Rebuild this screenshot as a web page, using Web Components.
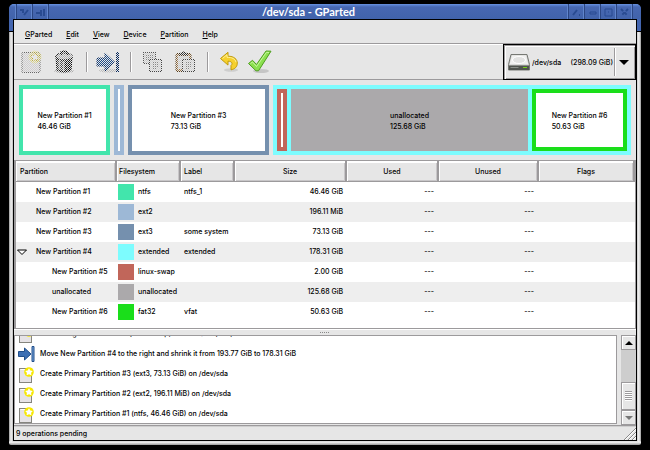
<!DOCTYPE html>
<html lang="en">
<head>
<meta charset="utf-8">
<title>/dev/sda - GParted</title>
<style>
  body { margin: 0; background: #000; font: 500 7px/10px Inter, "Liberation Sans", sans-serif; color: #000; }
</style>
</head>
<body>
<gp-window heading="/dev/sda - GParted">
  <gp-menubar items="GParted,Edit,View,Device,Partition,Help"></gp-menubar>
  <gp-toolbar>
    <gp-tool icon="new" label="New" disabled></gp-tool>
    <gp-tool icon="trash" label="Delete" disabled></gp-tool>
    <gp-separator></gp-separator>
    <gp-tool icon="resize" label="Resize/Move" disabled></gp-tool>
    <gp-separator></gp-separator>
    <gp-tool icon="copy" label="Copy" disabled></gp-tool>
    <gp-tool icon="paste" label="Paste" disabled></gp-tool>
    <gp-separator></gp-separator>
    <gp-tool icon="undo" label="Undo"></gp-tool>
    <gp-tool icon="apply" label="Apply"></gp-tool>
    <gp-device-select slot="end"></gp-device-select>
  </gp-toolbar>
  <gp-map sizes="91 10 141 358">
    <gp-block style="--edge:#42e5ac">New Partition #1<br>46.46 GiB</gp-block>
    <gp-block style="--edge:#9db8d6"></gp-block>
    <gp-block style="--edge:#7590ae">New Partition #3<br>73.13 GiB</gp-block>
    <gp-block style="--edge:#7dfcfe;--fill:#7dfcfe" group>
      <gp-map nested sizes="10 237 95">
        <gp-block style="--edge:#c1665a;--fill:#fff"></gp-block>
        <gp-block style="--edge:#aba9ab;--fill:#aba9ab">unallocated<br>125.68 GiB</gp-block>
        <gp-block style="--edge:#1ade1a;--fill:#fff">New Partition #6<br>50.63 GiB</gp-block>
      </gp-map>
    </gp-block>
  </gp-map>
  <gp-table></gp-table>
  <gp-handle></gp-handle>
  <gp-operations></gp-operations>
  <gp-status>9 operations pending</gp-status>
</gp-window>

<script>
const define = (name, html, setup) => customElements.define(name, class extends HTMLElement {
  connectedCallback() {
    if (this.shadowRoot) return;
    const t = document.createElement('template');
    t.innerHTML = typeof html === 'function' ? html(this) : html;
    this.attachShadow({ mode: 'open' }).append(t.content.cloneNode(true));
    if (setup) setup(this, this.shadowRoot);
  }
});

const star = 'M16 2.2l1.5 3 3.3.4-2.4 2.3.6 3.3-3-1.6-3 1.6.6-3.3-2.4-2.3 3.3-.4z';
const icons = {
  'new': `<rect x="3" y="2.500" width="18" height="20" rx="1" fill="#cfcdcf" stroke="#666"/>
    <circle cx="16" cy="7" r="6.500" fill="#e8dc50" opacity=".5"/><path d="${star}" fill="#e6e6e6" stroke="#b09a10" stroke-width=".8"/>`,
  page: `<rect x="1.500" y="3.500" width="12" height="14" fill="#e6e3e6" stroke="#85857e"/><path d="M2.500 4.500h10" stroke="#fff"/>
    <circle cx="11" cy="7" r="4.800" fill="#f7e800"/><path d="M11 3.200l1.300 2.200 2.500.5-1.700 1.900.3 2.500-2.400-1-2.400 1 .3-2.500-1.700-1.900 2.500-.5z" fill="#fff"/>`,
  trash: `<ellipse cx="12" cy="21" rx="10" ry="2.200" fill="#aaa"/>
    <path d="M4 7h16l-1 13q-7 4-14 0z" fill="#444" stroke="#000"/>
    <path d="M7.500 10v10M11.500 11v10" stroke="#aaa" stroke-width="1.500"/><path d="M14 11v10M17 10v10" stroke="#111" stroke-width="2"/>
    <ellipse cx="12" cy="6.500" rx="8.500" ry="3.500" fill="#aaa" stroke="#000"/><path d="M9 5V2q3-1.500 6 0v3" fill="none" stroke="#000" stroke-width="1.500"/>`,
  resize: `<ellipse cx="12" cy="20.500" rx="9" ry="2" fill="#bbb"/>
    <path d="M1 8h8V3l9.500 9L9 21v-5H1z" fill="#1d4a86" stroke="#06265a"/><rect x="20" y="2" width="3" height="20" fill="#06265a"/>`,
  move: `<path d="M.5 6.500h6V3l6.500 6-6.500 6v-3.500h-6z" fill="#3d70b4" stroke="#214f8b"/><path d="M14 1.500h2v15h-2z" fill="#79a4da" stroke="#214f8b"/>`,
  copy: `<rect x="3.500" y="2.500" width="12" height="11" fill="#ccc" stroke="#555"/><path d="M6 5.500h7M6 7.500h7M6 9.500h7" stroke="#888"/>
    <rect x="9.500" y="9.500" width="12" height="12" fill="#d4d4d4" stroke="#444"/><path d="M12 12.500h7M12 14.500h7M12 16.500h7M12 18.500h5" stroke="#888"/>`,
  paste: `<rect x="3" y="3.500" width="15" height="18" rx="1" fill="#a27a4c" stroke="#553a16"/><rect x="5" y="6" width="11" height="13" fill="#ccc"/>
    <path d="M6 5q0-2 3-2 1.500-2 3 0 3 0 3 2z" fill="#555" stroke="#111"/>
    <rect x="9.500" y="9.500" width="12" height="12" fill="#d4d4d4" stroke="#444"/><path d="M12 12.500h7M12 14.500h7M12 16.500h7M12 18.500h5" stroke="#888"/>`,
  undo: `<ellipse cx="14" cy="20" rx="7" ry="1.800" fill="#000" opacity=".1"/>
    <path d="M3.500 8.500L11 2.300v3.900c6 0 9.300 3 9.300 7 0 3.600-2.500 6-6.300 6.600v-4.300c2-1.700 1-4.300-3-4.300v3.900z" fill="#f6d02d" stroke="#c09a0a" stroke-linejoin="round"/>
    <path d="M5.500 8.500L10 4.700v2.600c5 0 8.300 1.500 9 5" fill="none" stroke="#fff29a"/>`,
  apply: `<ellipse cx="11" cy="21" rx="8" ry="2" fill="#000" opacity=".14"/>
    <path d="M-1.500 13.500l4-3.200 4 4.200L16 1l5 .2L8.500 20.800H6z" fill="#8be04f" stroke="#4f9e20" stroke-linejoin="round"/>
    <path d="M.5 13.500l2-1.500 4 4.500L16.500 2.300l2.500.2" fill="none" stroke="#c8f7a0"/>`,
  disk: `<path d="M3 1.500h16l2.500 10v5.500h-21v-5.500z" fill="#c6c7c4" stroke="#777974" stroke-linejoin="round"/>
    <path d="M3.800 2.300h14.400l2.200 9.200H1.600z" fill="#f0f0ef"/><ellipse cx="11" cy="7" rx="6.500" ry="3.500" fill="#e2e2e1" stroke="#fff"/>
    <path d="M1 12.500h20v4.500H1z" fill="#50544f"/><path d="M2.500 14.500h8" stroke="#8a8e88"/><path d="M15 14.500h4" stroke="#73d216"/>`,
};
const veil = `<defs><pattern id="v" width="2" height="2" patternUnits="userSpaceOnUse"><path d="M0 0h1v1H0zM1 1h1v1H1z" fill="#e6e6e6" shape-rendering="crispEdges"/></pattern></defs><rect x="-1" y="-1" width="26" height="26" fill="url(#v)"/>`;

define('gp-window', el => `
<style>
  :host { display: flex; flex-direction: column; box-sizing: border-box; height: 100vh; padding: 4px 9px 5px; }
  .frame { flex: 1; min-height: 0; display: flex; flex-direction: column; padding: 0 4px 4px; border-radius: 5px 5px 2px 2px;
    background: linear-gradient(#4466b0 27px, #000 27px 28px, transparent 28px),
      linear-gradient(0deg, #999, #f8f8f8 3px, transparent 4px), linear-gradient(90deg, #999, #f4f4f4 2px, #bbb 4px, #ccc calc(100% - 4px), #f4f4f4 calc(100% - 2px), #999); }
  header { display: flex; height: 15px; margin: 0 -4px; padding: 0 8px 0 7px; border-radius: 5px 5px 0 0; background: linear-gradient(#6a94e2, #5a82d0 1px, #4768b2 3px, #4163ab); }
  header div { display: flex; border-left: 1px solid #2b4683; box-shadow: -1px 0 #6085cd; }
  h1 { flex: 1; margin: 0; text-align: center; font: bold 11px/16px Lato, "Liberation Sans", sans-serif; color: #fff; }
  button { width: 16px; padding: 2px 0 0; border: 0; border-right: 1px solid #2b4683; background: none; box-shadow: inset -1px 0 #6085cd; }
  svg { display: block; margin: auto; fill: none; stroke: #294b91; stroke-width: 2; }
  main { flex: 1; min-height: 0; display: flex; flex-direction: column; border: 1px solid #000; background: #e6e6e6; }
</style>
<div class="frame">
  <header>
    <div><button aria-label="Window menu"><svg width="9" height="9"><path d="M0 2h3v3M4 7l4-5"/></svg></button><button aria-label="Pin"><svg width="9" height="9"><path d="M0 5h4M5 2v6M8 1v7"/></svg></button></div>
    <h1>${el.getAttribute('heading')}</h1>
    <div><button aria-label="Shade"><svg width="9" height="9"><path d="M1 7l4-5M7 7h1"/></svg></button><button aria-label="Minimize"><svg width="9" height="9"><path d="M2 4h6v2H2z" stroke-width="1"/></svg></button><button aria-label="Maximize"><svg width="9" height="9"><path d="M1 1h7v7H1zM4 4h1" stroke-width="1"/></svg></button><button aria-label="Close"><svg width="9" height="9"><path d="M1 1l7 7M8 1L1 8" stroke-dasharray="3 2"/></svg></button></div>
  </header>
  <main><slot></slot></main>
</div>`);

define('gp-menubar', el => `
<style>
  :host { display: flex; box-sizing: border-box; height: 25px; padding: 5px 4px 0; border-bottom: 1px solid #fff; box-shadow: inset 0 -1px #9c9a9c; }
  button { padding: 0 7px; border: 0; background: none; font: inherit; color: inherit; }
  u { text-underline-offset: 1px; }
</style>` + el.getAttribute('items').split(',').map(t => `<button><u>${t[0]}</u>${t.slice(1)}</button>`).join(''));

define('gp-toolbar', `
<style>
  :host { display: flex; justify-content: space-between; height: 34px; padding-left: 1px; border-bottom: 1px solid #9c9a9c; }
  div { display: flex; }
</style><div><slot></slot></div><slot name="end"></slot>`);

define('gp-separator', `
<style>:host { display: block; width: 1px; margin: 7px 4px 7px 5px; background: #9c9a9c; border-right: 1px solid #fff; }</style>`,
  el => el.setAttribute('role', 'separator'));

define('gp-icon', el => {
  const n = el.getAttribute('name'), s = +el.getAttribute('size') || 24;
  return `<style>:host { display: block; } svg { display: block; overflow: visible; }</style>
  <svg width="${s}" height="${s}" viewBox="0 0 ${s} ${s}" aria-hidden="true">${icons[n]}${el.hasAttribute('dim') ? veil : ''}</svg>`;
});

define('gp-tool', el => `
<style>
  :host { display: block; }
  button { display: block; padding: 5px 5px 5px 4px; border: 0; background: none; }
</style>
<button aria-label="${el.getAttribute('label')}" ${el.hasAttribute('disabled') ? 'disabled' : ''}><gp-icon name="${el.getAttribute('icon')}" ${el.hasAttribute('disabled') ? 'dim' : ''}></gp-icon></button>`);

define('gp-device-select', `
<style>
  :host { display: grid; grid-template-columns: 28px 82px 21px; align-items: center; margin: -1px 0; border: 1px solid #000;
    background: #e6e6e6; box-shadow: inset 1px 1px #9c9a9c, inset 2px 2px #fff, inset -1px -1px #9c9a9c; z-index: 1; }
  gp-icon { grid-area: 1 / 1; padding: 4px 0 0 4px; }
  select { grid-area: 1 / 1 / 2 / 4; align-self: stretch; appearance: none; border: 0; margin: 0; padding: 1px 0 0 28px; background: none; font: inherit; color: inherit; outline: 0; }
  i { grid-area: 1 / 3; display: grid; place-items: center; height: 28px; border-left: 1px solid #9c9a9c; box-shadow: inset 1px 0 #fff; pointer-events: none; }
  i::after { content: ""; margin-right: 3px; border: solid transparent; border-width: 5px 5px 0; border-top-color: #000; }
</style>
<gp-icon name="disk" size="22"></gp-icon>
<select aria-label="Device"><option>/dev/sda&nbsp;&nbsp;&nbsp;&nbsp;&nbsp;(298.09 GiB)</option></select><i></i>`);

define('gp-map', el => `
<style>
  :host { display: grid; gap: 4px; height: 70px; padding: 5px 5px 5px 5px;
    grid-template-columns: ${el.getAttribute('sizes').split(' ').map(n => `minmax(0, ${n}fr)`).join(' ')}; }
  :host([nested]) { height: 62px; padding: 0; }
</style><slot></slot>`);

define('gp-block', `
<style>
  :host { display: grid; place-content: center; padding-top: 2px; border: 4px solid var(--edge); background: var(--fill, #fff); line-height: 11px; white-space: nowrap; }
  :host([group]) { display: block; padding: 0; }
</style><slot></slot>`);

const rows = [
  [0, 'New Partition #1', '#42e5ac', 'ntfs', 'ntfs_1', '46.46 GiB'],
  [0, 'New Partition #2', '#9db8d6', 'ext2', '', '196.11 MiB'],
  [0, 'New Partition #3', '#7590ae', 'ext3', 'some system', '73.13 GiB'],
  [0, 'New Partition #4', '#7dfcfe', 'extended', 'extended', '178.31 GiB', true],
  [1, 'New Partition #5', '#c1665a', 'linux-swap', '', '2.00 GiB'],
  [1, 'unallocated', '#aba9ab', 'unallocated', '', '125.68 GiB'],
  [1, 'New Partition #6', '#1ade1a', 'fat32', 'vfat', '50.63 GiB'],
];
define('gp-table', `
<style>
  :host { display: block; height: 167px; border: solid #9c9a9c; border-width: 1px 1px 1px 2px; background: #fff; box-shadow: 0 1px #fff; }
  table { width: 100%; table-layout: fixed; border-collapse: separate; border-spacing: 0; }
  th, td { padding: 0 4px; font-weight: inherit; text-align: left; white-space: nowrap; }
  th { height: 21px; box-sizing: border-box; padding-top: 2px; background: #e6e6e6; border-right: 2px solid #9c9a9c; border-bottom: 1px solid #9c9a9c; box-shadow: inset 1px 2px #fff, inset -1px -1px #c8c6c8; }
  th:nth-child(2) { padding-left: 2px; }
  th:nth-child(3), td:nth-child(3) { padding-left: 3px; }
  th.c { text-align: center; }
  td { height: 20px; }
  tbody tr:nth-child(even) { background: #eee; }
  td.n { text-align: right; }
  td.d { text-align: right; padding-right: 5px; }
  .name { display: grid; grid-template-columns: 16px auto; justify-content: start; align-items: center; }
  .child { padding-left: 16px; }
  .name span { grid-column: 2; }
  .name button { grid-area: 1 / 1; padding: 0; border: 0; background: none; height: 10px; margin-left: -4px; width: 12px; }
  svg { display: block; }
  .fs { display: flex; align-items: center; gap: 4px; margin-left: -3px; }
  .fs i { width: 16px; height: 16px; }
</style>
<table>
<colgroup><col style="width:101px"><col style="width:64px"><col style="width:54px"><col style="width:112px"><col style="width:92px"><col style="width:100px"><col></colgroup>
<thead><tr><th>Partition</th><th>Filesystem</th><th>Label</th><th class="c">Size</th><th class="c">Used</th><th class="c">Unused</th><th class="c">Flags</th></tr></thead>
<tbody>${rows.map(r => `<tr><td><div class="name ${r[0] ? 'child' : ''}">${r[6] ? '<button aria-label="Collapse" aria-expanded="true"><svg width="12" height="10"><path d="M1.500 3h9L6 7.500z" fill="#fff" stroke="#000"/></svg></button>' : ''}<span>${r[1]}</span></div></td><td><div class="fs"><i style="background:${r[2]}"></i>${r[3]}</div></td><td>${r[4]}</td><td class="n">${r[5]}</td><td class="d">---</td><td class="d">---</td><td></td></tr>`).join('')}</tbody>
</table>`);

define('gp-handle', `
<style>
  :host { display: grid; place-items: center; height: 6px; }
  i { width: 10px; height: 1px; background: repeating-linear-gradient(90deg, #888 0 1px, #e6e6e6 1px 2px); }
</style><i></i>`, el => el.setAttribute('role', 'separator'));

const ops = [
  ['page', 'Create Logical Partition #1 (linux-swap, 2.00 GiB) on /dev/sda'],
  ['move', 'Move New Partition #4 to the right and shrink it from 193.77 GiB to 178.31 GiB'],
  ['page', 'Create Primary Partition #3 (ext3, 73.13 GiB) on /dev/sda'],
  ['page', 'Create Primary Partition #2 (ext2, 196.11 MiB) on /dev/sda'],
  ['page', 'Create Primary Partition #1 (ntfs, 46.46 GiB) on /dev/sda'],
];
define('gp-operations', `
<style>
  :host { flex: 1; min-height: 0; display: flex; gap: 4px; }
  ul { flex: 1; display: flex; flex-direction: column; justify-content: flex-end; overflow: hidden; margin: 0 0 1px; padding: 1px 0 0; list-style: none;
    background: #fff; border: 1px solid #9c9a9c; }
  li { flex: none; display: flex; align-items: center; gap: 4px; box-sizing: border-box; height: 20px; padding: 2px 0 0 3px; white-space: nowrap; }
</style>
<ul>${ops.map(o => `<li><gp-icon name="${o[0]}" size="18"></gp-icon>${o[1]}</li>`).join('')}</ul>
<gp-scrollbar></gp-scrollbar>`);

define('gp-scrollbar', `
<style>
  :host { display: flex; flex-direction: column; width: 15px; background: #cdcdcd; }
  button, div { box-sizing: border-box; display: grid; place-items: center; padding: 0; border: 1px solid #9c9a9c; background: #e6e6e6; box-shadow: inset 1px 1px #fff; }
  button { height: 15px; }
  div { height: 28px; margin-top: auto; }
  i { width: 7px; height: 10px; background: repeating-linear-gradient(#9c9a9c 0 1px, #fff 1px 2px); }
  svg { display: block; }
</style>
<button aria-label="Scroll up"><svg width="8" height="4"><path d="M0 4l4-4 4 4z"/></svg></button>
<div><i></i></div>
<button aria-label="Scroll down"><svg width="8" height="4"><path d="M0 0l4 4 4-4z" fill="#777"/></svg></button>`);

define('gp-status', `
<style>
  :host { display: flex; justify-content: space-between; align-items: flex-end; height: 14px; padding-left: 2px; border-top: 1px solid #9c9a9c; box-shadow: inset 0 1px #cfcfcf; }
  span { line-height: 12px; }
  svg { display: block; }
</style><span><slot></slot></span>
<svg width="12" height="13" fill="none" aria-hidden="true"><path d="M1 13L12 2M5 13l7-7M9 13l3-3" stroke="#fff"/><path d="M0 13L12 1M4 13l8-8M8 13l4-4" stroke="#888"/></svg>`);
</script>
</body>
</html>
